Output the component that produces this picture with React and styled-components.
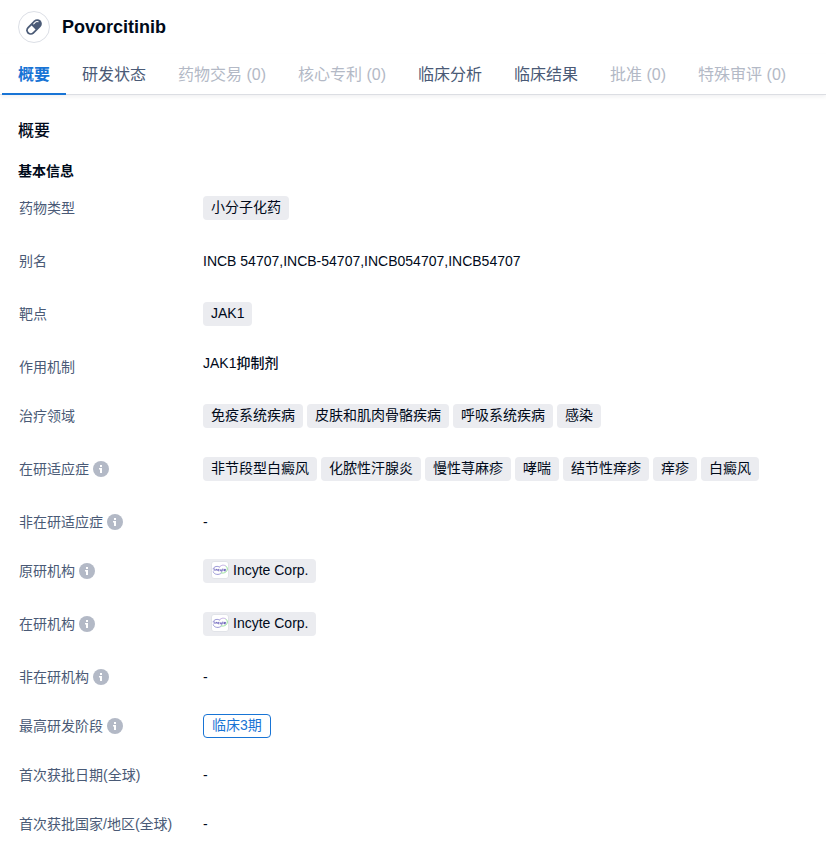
import styled, { createGlobalStyle, css } from "styled-components"

const GlobalStyle = createGlobalStyle`
    * {
        box-sizing: border-box;
    }
    body {
        margin: 0;
        background-color: #ffffff;
        color: #000a1a;
        font-family: "Liberation Sans", Arial, "Noto Sans CJK SC", sans-serif;
        font-size: 14px;
        line-height: 24px;
    }
`

const Header = styled.header`
    display: flex;
    align-items: center;
    gap: 12px;
    padding: 11px 18px;
    h1 {
        margin: 0;
        font-size: 18px;
        line-height: 24px;
        font-weight: 700;
    }
`
const DrugIcon = styled.div`
    display: flex;
    align-items: center;
    justify-content: center;
    width: 32px;
    height: 32px;
    border: 1px solid #dcdfe6;
    border-radius: 50%;
`
const Tabs = styled.nav`
    display: flex;
    padding-left: 2px;
    border-bottom: 1px solid #dcdee3;
    box-shadow: 0 2px 4px rgba(0, 10, 26, 0.06);
`
const Tab = styled.button`
    height: 41px;
    margin-bottom: -1px;
    padding: 2px 16px 0;
    border: none;
    border-bottom: 2px solid transparent;
    background: none;
    color: #4a5a76;
    font-family: inherit;
    font-size: 16px;
    line-height: 24px;
    white-space: nowrap;
    cursor: pointer;
    &:disabled {
        color: #b3b9c6;
        cursor: not-allowed;
    }
    ${({ $active }) => $active && css`
        border-bottom-color: #1874d5;
        color: #1874d5;
        font-weight: 700;
    `}
`
const Section = styled.main`
    padding: 24px 18px 11px;
    h2 {
        margin: 0;
        font-size: 16px;
        line-height: 24px;
        font-weight: 500;
    }
    h3 {
        margin: 16px 0 13px;
        font-size: 14px;
        line-height: 24px;
        font-weight: 700;
    }
`
const InfoList = styled.dl`
    display: flex;
    flex-direction: column;
    gap: 25px;
    margin: 0;
`
const Row = styled.div`
    display: flex;
    align-items: flex-start;
`
const Label = styled.dt`
    display: flex;
    flex: none;
    align-items: center;
    gap: 4px;
    width: 185px;
    padding-left: 1px;
    color: #4a5a76;
`
const Value = styled.dd`
    flex: 1;
    margin: 0;
`
const TagList = styled.div`
    display: flex;
    flex-wrap: wrap;
    gap: 4px;
    padding-bottom: 4px;
`
const Tag = styled.span`
    display: inline-flex;
    align-items: center;
    gap: 4px;
    height: 24px;
    padding: 0 8px 2px;
    border-radius: 4px;
    background-color: #ebecf0;
    color: #000a1a;
    text-decoration: none;
`
const Phase = styled(Tag)`
    border: 1px solid #1874d5;
    background-color: #ffffff;
    color: #1874d5;
    vertical-align: top;
`
const Alias = styled.div`
    padding-bottom: 4px;
`
const Mechanism = styled.div`
    line-height: 16px;
    font-weight: 500;
`

const PillIcon = () => (
    <svg width="20" height="20" viewBox="0 0 20 20" aria-hidden="true">
        <g transform="rotate(-45 10 10)">
            <rect x="0.8" y="5.4" width="18.4" height="9.2" rx="4.6" fill="#4a5a76" />
            <path d="M9.4 7.2h-4a2.8 2.8 0 0 0 0 5.6h4z" fill="#ffffff" />
            <path d="M12 7.6h2.4q1.6.1 2.2 1.6" fill="none" stroke="#ffffff" strokeWidth="1.1" strokeLinecap="round" />
        </g>
    </svg>
)

const InfoIcon = () => (
    <svg width="16" height="16" viewBox="0 0 16 16" aria-hidden="true">
        <circle cx="8" cy="8" r="8" fill="#b3b9c6" />
        <rect x="7" y="4" width="2" height="2" fill="#ffffff" />
        <path d="M6 7h3v5H7V8.4H6z" fill="#ffffff" />
    </svg>
)

const IncyteLogo = () => (
    <svg width="18" height="18" viewBox="0 0 18 18" aria-hidden="true">
        <rect x="0.5" y="0.5" width="17" height="17" rx="2.5" fill="#ffffff" stroke="#e1e3e8" />
        <g fill="none" strokeWidth="0.9">
            <path d="M9 6.4C7 4.6 2.8 5.2 2 8.2M2.2 10.4c.6 3.4 6 4 8.4 1.4" stroke="#8f8bd0" />
            <path d="M8.4 6.2c1.6-2.4 4.8-2.6 6.6-1" stroke="#b9a5dc" />
            <path d="M15 5.2c2.4 1.8 1.6 6.2-2.6 6.8-1 .2-2 0-2.6-.4" stroke="#8fdc92" />
        </g>
        <path d="M3.2 7.4v2.4M4.8 9.8V8.4h1.4v1.4M8.4 8.4H7.2v1.4h1.2M9.4 8.4v1.4h1.2M10.8 8.4v2.4M11.8 7.6v2.2M13 9.2h1.6v-.8H13v1.4h1.6" fill="none" stroke="#5a50b4" strokeWidth="0.8" />
    </svg>
)

const tabs = [
    { text: "概要", active: true },
    { text: "研发状态" },
    { text: "药物交易 (0)", disabled: true },
    { text: "核心专利 (0)", disabled: true },
    { text: "临床分析" },
    { text: "临床结果" },
    { text: "批准 (0)", disabled: true },
    { text: "特殊审评 (0)", disabled: true },
]
const areas = ["免疫系统疾病", "皮肤和肌肉骨骼疾病", "呼吸系统疾病", "感染"]
const indications = ["非节段型白癜风", "化脓性汗腺炎", "慢性荨麻疹", "哮喘", "结节性痒疹", "痒疹", "白癜风"]

const InfoRow = ({ label, info, children }) => {
    return (
        <Row>
            <Label>{label}{info && <InfoIcon />}</Label>
            <Value>{children}</Value>
        </Row>
    )
}

const Tags = ({ items }) => (
    <TagList>
        {items.map((item) => <Tag key={item}>{item}</Tag>)}
    </TagList>
)

const Company = ({ name }) => (
    <TagList>
        <Tag as="a" href="#"><IncyteLogo />{name}</Tag>
    </TagList>
)

const App = () => {
    return (
        <>
            <GlobalStyle />
            <Header>
                <DrugIcon><PillIcon /></DrugIcon>
                <h1>Povorcitinib</h1>
            </Header>
            <Tabs>
                {tabs.map(({ text, active, disabled }) => (
                    <Tab key={text} type="button" $active={active} disabled={disabled}>{text}</Tab>
                ))}
            </Tabs>
            <Section>
                <h2>概要</h2>
                <h3>基本信息</h3>
                <InfoList>
                    <InfoRow label="药物类型"><Tags items={["小分子化药"]} /></InfoRow>
                    <InfoRow label="别名">
                        <Alias>INCB 54707,INCB-54707,INCB054707,INCB54707</Alias>
                    </InfoRow>
                    <InfoRow label="靶点"><TagList><Tag as="a" href="#">JAK1</Tag></TagList></InfoRow>
                    <InfoRow label="作用机制"><Mechanism>JAK1抑制剂</Mechanism></InfoRow>
                    <InfoRow label="治疗领域"><Tags items={areas} /></InfoRow>
                    <InfoRow label="在研适应症" info><Tags items={indications} /></InfoRow>
                    <InfoRow label="非在研适应症" info>-</InfoRow>
                    <InfoRow label="原研机构" info><Company name="Incyte Corp." /></InfoRow>
                    <InfoRow label="在研机构" info><Company name="Incyte Corp." /></InfoRow>
                    <InfoRow label="非在研机构" info>-</InfoRow>
                    <InfoRow label="最高研发阶段" info><Phase>临床3期</Phase></InfoRow>
                    <InfoRow label="首次获批日期(全球)">-</InfoRow>
                    <InfoRow label="首次获批国家/地区(全球)">-</InfoRow>
                </InfoList>
            </Section>
        </>
    )
}

export default App
